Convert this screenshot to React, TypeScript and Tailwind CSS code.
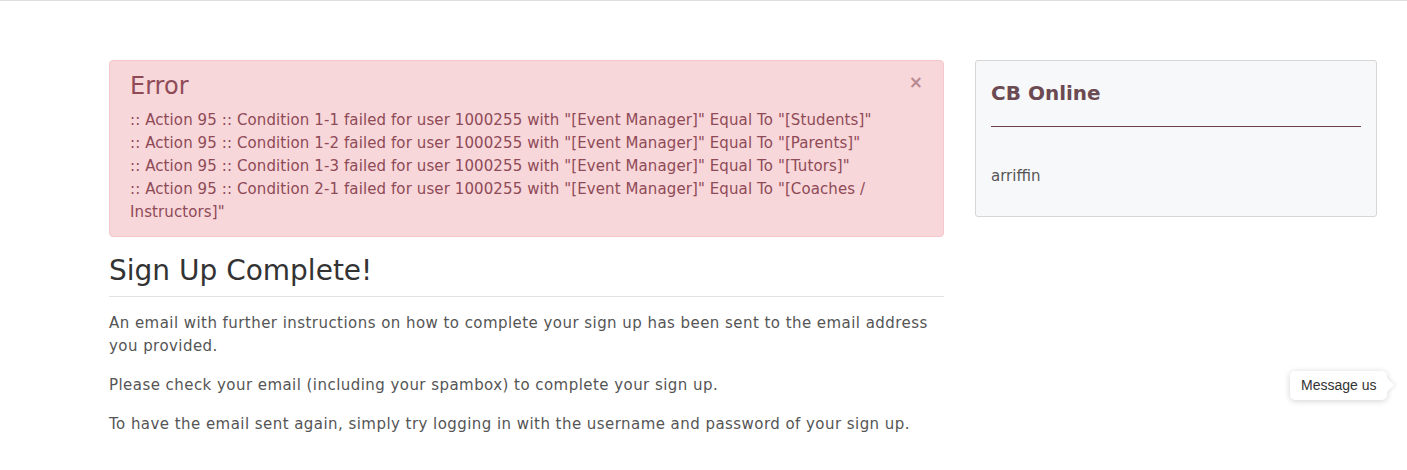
export default function App() {
  const errors = [
    ':: Action 95 :: Condition 1-1 failed for user 1000255 with "[Event Manager]" Equal To "[Students]"',
    ':: Action 95 :: Condition 1-2 failed for user 1000255 with "[Event Manager]" Equal To "[Parents]"',
    ':: Action 95 :: Condition 1-3 failed for user 1000255 with "[Event Manager]" Equal To "[Tutors]"',
    ':: Action 95 :: Condition 2-1 failed for user 1000255 with "[Event Manager]" Equal To "[Coaches / Instructors]"',
  ];

  return (
    <div className="relative min-h-[470px] bg-white border-t border-[#dddddd] font-['DejaVu_Sans',sans-serif]">
      <div className="flex gap-[31px] pl-[109px] pt-[59px]">
        {/* Main column */}
        <div className="w-[835px] flex flex-col">
          <div className="relative rounded-[4px] border border-[#f5c6cb] bg-[#f8d7da] pl-[20px] pr-[64px] pt-[11px] pb-[12px] text-[#8e4a57]">
            <h4 className="text-[24px] leading-[29px] mb-[8px]">Error</h4>
            <div className="text-[15px] leading-[23px] tracking-[0.1px]">
              {errors.map((e, i) => (
                <div key={i}>{e}</div>
              ))}
            </div>
            <button className="absolute right-[20px] top-[13px] text-[17px] font-bold leading-none text-[#b98a93]">
              ×
            </button>
          </div>

          <h2 className="mt-[17px] text-[28px] leading-[34px] text-[#333333]">Sign Up Complete!</h2>
          <hr className="mt-[8px] border-t border-[#e2e2e2]" />

          <div className="mt-[15px] text-[15px] leading-[23px] tracking-[0.45px] text-[#555555] flex flex-col gap-[16px]">
            <p>
              An email with further instructions on how to complete your sign up has been sent to the email address
              you provided.
            </p>
            <p>Please check your email (including your spambox) to complete your sign up.</p>
            <p>To have the email sent again, simply try logging in with the username and password of your sign up.</p>
          </div>
        </div>

        {/* Sidebar */}
        <div className="w-[402px] self-start rounded-[3px] border border-[#d6d6d6] bg-[#f7f8fa] px-[15px] pt-[18px] pb-[28px]">
          <h3 className="text-[20px] leading-[28px] font-bold text-[#6b4a52]">CB Online</h3>
          <div className="mt-[19px] border-t border-[#6b3f4a]" />
          <p className="mt-[38px] text-[15px] leading-[23px] text-[#555555]">arriffin</p>
        </div>
      </div>

      {/* Message us bubble */}
      <div className="absolute left-[1290px] top-[370px] rounded-[5px] bg-white px-[11px] py-[5px] text-[14px] leading-[19px] text-[#333333] shadow-[0_1px_6px_rgba(0,0,0,0.18)] font-['Liberation_Sans',sans-serif]">
        Message us
        <span className="absolute right-[-5px] top-[9px] h-[10px] w-[10px] rotate-45 bg-white shadow-[2px_-2px_3px_rgba(0,0,0,0.06)]" />
      </div>
    </div>
  );
}
